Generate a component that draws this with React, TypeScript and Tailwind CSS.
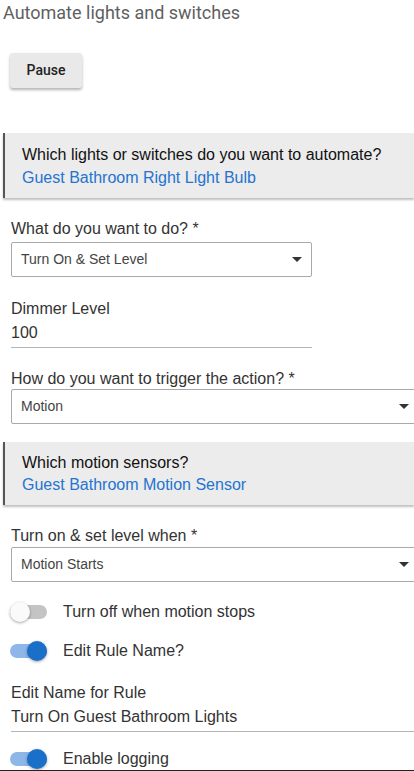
import React from 'react';

const sans = { fontFamily: '"Liberation Sans", Arial, sans-serif' };

function Select({ value, wide }: { value: string; wide?: boolean }) {
    return (
        <div
            className={`ml-[8px] flex h-[35px] items-center justify-between rounded-[2px] border border-[#a9a9a9] bg-white pl-[9px] pr-[9px] ${
                wide ? 'w-[408px]' : 'w-[301px]'
            }`}
        >
            <span className="text-[14px] text-[#444]">{value}</span>
            <span className="h-0 w-0 border-x-[5px] border-t-[5px] border-x-transparent border-t-[#333]" />
        </div>
    );
}

function InfoBox({ question, answer, tall }: { question: string; answer: string; tall?: boolean }) {
    return (
        <div
            className={`border-l-[2px] border-[#555] bg-[#ececec] pl-[17px] shadow-[0_2px_2px_rgba(0,0,0,0.25)] ${
                tall ? 'pb-[8px] pt-[11px]' : 'pb-[9px] pt-[10px]'
            }`}
        >
            <div className="text-[16px] leading-[22px] text-[#111]">{question}</div>
            <div className={`text-[16px] text-[#2474d0] ${tall ? 'leading-[24px]' : 'leading-[22px]'}`}>{answer}</div>
        </div>
    );
}

function Toggle({ on, label }: { on: boolean; label: string }) {
    return (
        <div className="flex h-[30px] items-center">
            <div className="relative ml-[7px] h-[14px] w-[37px]">
                <div className={`h-[14px] w-[37px] rounded-full ${on ? 'bg-[#8fb6e8]' : 'bg-[#c4c4c4]'}`} />
                <div
                    className={`absolute top-[-3px] h-[20px] w-[20px] rounded-full shadow-[0_1px_3px_rgba(0,0,0,0.35)] ${
                        on ? 'left-[17px] bg-[#1a70c9]' : 'left-0 bg-[#fafafa]'
                    }`}
                />
            </div>
            <span className="ml-[16px] text-[16px] text-[#333]">{label}</span>
        </div>
    );
}

function Label({ text, className }: { text: string; className: string }) {
    return <div className={`ml-[8px] text-[16px] leading-[20px] text-[#333] ${className}`}>{text}</div>;
}

function TextValue({ value, wide, className }: { value: string; wide?: boolean; className: string }) {
    return (
        <div
            className={`ml-[8px] border-b border-[#b5b5b5] pb-[4px] text-[16px] leading-[20px] text-[#333] ${
                wide ? 'w-[403px]' : 'w-[301px]'
            } ${className}`}
        >
            {value}
        </div>
    );
}

export default function App() {
    return (
        <div className="w-[414px] bg-white">
            <div className="h-[770px] overflow-hidden pl-[3px]" style={sans}>
                <div
                    className="h-[25px] text-[18px] leading-[25px] text-[#5f5f5f]"
                    style={{ fontFamily: 'Roboto, sans-serif' }}
                >
                    Automate lights and switches
                </div>

                <button
                    className="ml-[7px] mt-[28px] h-[35px] w-[72px] rounded-[3px] bg-[#e9e9e9] text-[14px] font-medium text-[#222] shadow-[0_2px_3px_rgba(0,0,0,0.3)]"
                    style={{ fontFamily: 'Roboto, sans-serif' }}
                >
                    Pause
                </button>

                <div className="mt-[45px]">
                    <InfoBox
                        question="Which lights or switches do you want to automate?"
                        answer="Guest Bathroom Right Light Bulb"
                        tall
                    />
                </div>

                <Label text="What do you want to do? *" className="mt-[21px]" />
                <div className="mt-[3px]">
                    <Select value="Turn On & Set Level" />
                </div>

                <Label text="Dimmer Level" className="mt-[22px]" />
                <TextValue value="100" className="mt-[4px]" />

                <Label text="How do you want to trigger the action? *" className="mt-[21px]" />
                <div>
                    <Select value="Motion" wide />
                </div>

                <div className="mt-[18px]">
                    <InfoBox question="Which motion sensors?" answer="Guest Bathroom Motion Sensor" />
                </div>

                <Label text="Turn on & set level when *" className="mt-[21px]" />
                <div className="mt-[1px]">
                    <Select value="Motion Starts" wide />
                </div>

                <div className="mt-[15px]">
                    <Toggle on={false} label="Turn off when motion stops" />
                </div>
                <div className="mt-[9px]">
                    <Toggle on label="Edit Rule Name?" />
                </div>

                <Label text="Edit Name for Rule" className="mt-[17px]" />
                <TextValue value="Turn On Guest Bathroom Lights" wide className="mt-[4px]" />

                <div className="mt-[12px]">
                    <Toggle on label="Enable logging" />
                </div>
            </div>
            <div className="h-[1px] bg-[#222]" />
        </div>
    );
}
